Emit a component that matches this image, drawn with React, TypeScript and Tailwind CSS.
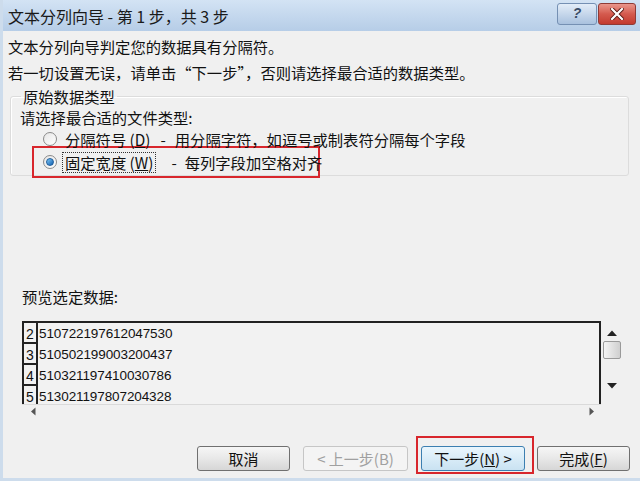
import React from "react";

const cjk = { fontFamily: '"Noto Sans CJK SC", "Liberation Sans", sans-serif' };

function Radio({ checked }: { checked?: boolean }) {
  return (
    <span className="inline-flex w-[14px] h-[14px] rounded-full border border-[#8a8a8a] bg-gradient-to-br from-[#e6e6e6] to-[#ffffff] items-center justify-center shrink-0">
      {checked && (
        <span className="w-[8px] h-[8px] rounded-full bg-gradient-to-br from-[#7ec8f5] to-[#0a5fb0] border border-[#1f5e9c]" />
      )}
    </span>
  );
}

function Btn({ children, disabled, focus, w }: { children: React.ReactNode; disabled?: boolean; focus?: boolean; w: string }) {
  return (
    <div
      className={`${w} h-[25px] rounded-[3px] border flex items-center justify-center text-[15px] leading-none whitespace-nowrap ${
        focus ? "border-[#3c7fb1] bg-gradient-to-b from-[#eaf6fd] to-[#c9e2f2]" : disabled ? "border-[#c6c6c6] bg-[#f4f4f4] text-[#a0a0a0]" : "border-[#707070] bg-gradient-to-b from-[#f6f6f6] via-[#e8e8e8] to-[#d6d6d6] text-[#111]"
      }`}
    >
      {children}
    </div>
  );
}

const rows = [
  ["2", "510722197612047530"],
  ["3", "510502199003200437"],
  ["4", "510321197410030786"],
  ["5", "513021197807204328"],
];

export default function App() {
  return (
    <div className="w-[640px] h-[481px] bg-[#f0f0f0] flex flex-col overflow-hidden border-l-[3px] border-b-[3px] border-[#cddcec] text-[#111]" style={cjk}>
      {/* title bar */}
      <div className="h-[31px] shrink-0 flex items-center bg-gradient-to-b from-[#d3e3f4] to-[#b6cde7] -ml-[3px] pl-[8px]">
        <span className="text-[16px] text-[#1a1a1a] flex-1">文本分列向导 - 第 1 步，共 3 步</span>
        <div className="flex items-center gap-[1px] mr-[4px] mt-[-4px]">
          <div className="w-[40px] h-[22px] rounded-[3px] border border-[#7590b3] bg-gradient-to-b from-[#e3edf8] to-[#a9c1de] flex items-center justify-center text-[14px] font-bold italic text-[#3a4d66]" style={{ fontFamily: '"Liberation Sans", sans-serif' }}>?</div>
          <div className="w-[38px] h-[22px] rounded-[3px] border border-[#8f3b36] bg-gradient-to-b from-[#e9968c] via-[#d45a4e] to-[#c33a2e] flex items-center justify-center">
            <svg width="14" height="12" viewBox="0 0 14 12">
              <path d="M2 1 L12 11 M12 1 L2 11" stroke="#5a1a14" strokeWidth="4" strokeLinecap="square" />
              <path d="M2 1 L12 11 M12 1 L2 11" stroke="#ffffff" strokeWidth="2.2" strokeLinecap="square" />
            </svg>
          </div>
        </div>
      </div>

      <div className="flex flex-col pl-[5px] text-[15.3px]">
        <div className="mt-[5px] h-[21px] leading-[21px] whitespace-nowrap">文本分列向导判定您的数据具有分隔符。</div>
        <div className="mt-[5px] h-[21px] leading-[21px] whitespace-nowrap">若一切设置无误，请单击“下一步”，否则请选择最合适的数据类型。</div>

        <fieldset className="mt-[3px] ml-[2px] w-[619px] h-[90px] border border-[#dcdcdc] rounded-[3px] px-[8px] shadow-[inset_1px_1px_0_#ffffff]">
          <legend className="px-[2px] ml-[2px] text-[15.3px] leading-[21px]">原始数据类型</legend>
          <div className="h-[21px] leading-[21px] ml-[1px] whitespace-nowrap">请选择最合适的文件类型:</div>
          <div className="h-[22px] flex items-center ml-[24px] whitespace-nowrap">
            <Radio />
            <span className="ml-[8px]">分隔符号 (<u>D</u>)</span>
            <span className="ml-[10px]">-</span>
            <span className="ml-[9px]">用分隔字符，如逗号或制表符分隔每个字段</span>
          </div>
          <div className="ml-[13px] w-[288px] h-[32px] border-2 border-[#d8262c] flex items-center pl-[9px] -mt-[4px] whitespace-nowrap shrink-0">
            <Radio checked />
            <span className="ml-[5px] border border-dotted border-[#333] px-[2px] leading-[19px] shrink-0">固定宽度 (<u>W</u>)</span>
            <span className="ml-[15px] shrink-0">-</span>
            <span className="ml-[8px] shrink-0">每列字段加空格对齐</span>
          </div>
        </fieldset>

        <div className="mt-[110px] ml-[14px] h-[21px] leading-[21px]">预览选定数据:</div>

        <div className="mt-[14px] ml-[14px] flex items-start">
          <div className="w-[579px] h-[83px] border-l-2 border-t-2 border-r-2 border-[#222] bg-[#f2f2f2] overflow-hidden" style={{ fontFamily: '"Liberation Sans", sans-serif' }}>
            {rows.map(([n, v]) => (
              <div key={n} className="h-[21px] flex">
                <div className="w-[14px] border-r-2 border-b-2 border-[#222] flex items-end justify-center text-[14px] leading-[16px]">{n}</div>
                <div className="pl-[1px] text-[13.5px] leading-[19px] flex items-center tracking-[-0.1px]">{v}</div>
              </div>
            ))}
          </div>
          <div className="w-[20px] ml-[1px] pt-[8px] flex flex-col items-center text-[#222]">
            <svg width="12" height="8" viewBox="0 0 12 8" className="block">
              <polygon points="1,7 6,1.5 11,7" fill="#222" />
            </svg>
            <div className="mt-[4px] w-[18px] h-[18px] rounded-[2px] border border-[#9a9a9a] bg-gradient-to-r from-[#f4f4f4] to-[#cfcfcf]" />
            <svg width="12" height="8" viewBox="0 0 12 8" className="block mt-[23px]">
              <polygon points="1,1 11,1 6,6.5" fill="#222" />
            </svg>
          </div>
        </div>
        <div className="ml-[14px] w-[579px] h-[14px] border-t border-[#dadada] flex items-center justify-between px-[8px]">
          <svg width="6" height="9" viewBox="0 0 6 9"><path d="M5.5 0.5 L1 4.5 L5.5 8.5 Z" fill="#555" /></svg>
          <svg width="6" height="9" viewBox="0 0 6 9" className="mr-[-2px]"><path d="M0.5 0.5 L5 4.5 L0.5 8.5 Z" fill="#555" /></svg>
        </div>

        <div className="mt-[18px] flex items-start">
          <div className="ml-[189px] mt-[10px]">
            <Btn w="w-[93px]">取消</Btn>
          </div>
          <div className="ml-[13px] mt-[10px]">
            <Btn w="w-[105px]" disabled>&lt; 上一步(B)</Btn>
          </div>
          <div className="ml-[8px] border-2 border-[#d8262c] pl-[3px] pr-[7px] pt-[8px] pb-[1px]">
            <Btn w="w-[104px]" focus>下一步(<u>N</u>) &gt;</Btn>
          </div>
          <div className="ml-[3px] mt-[10px]">
            <Btn w="w-[93px]">完成(<u>F</u>)</Btn>
          </div>
        </div>
      </div>
    </div>
  );
}
